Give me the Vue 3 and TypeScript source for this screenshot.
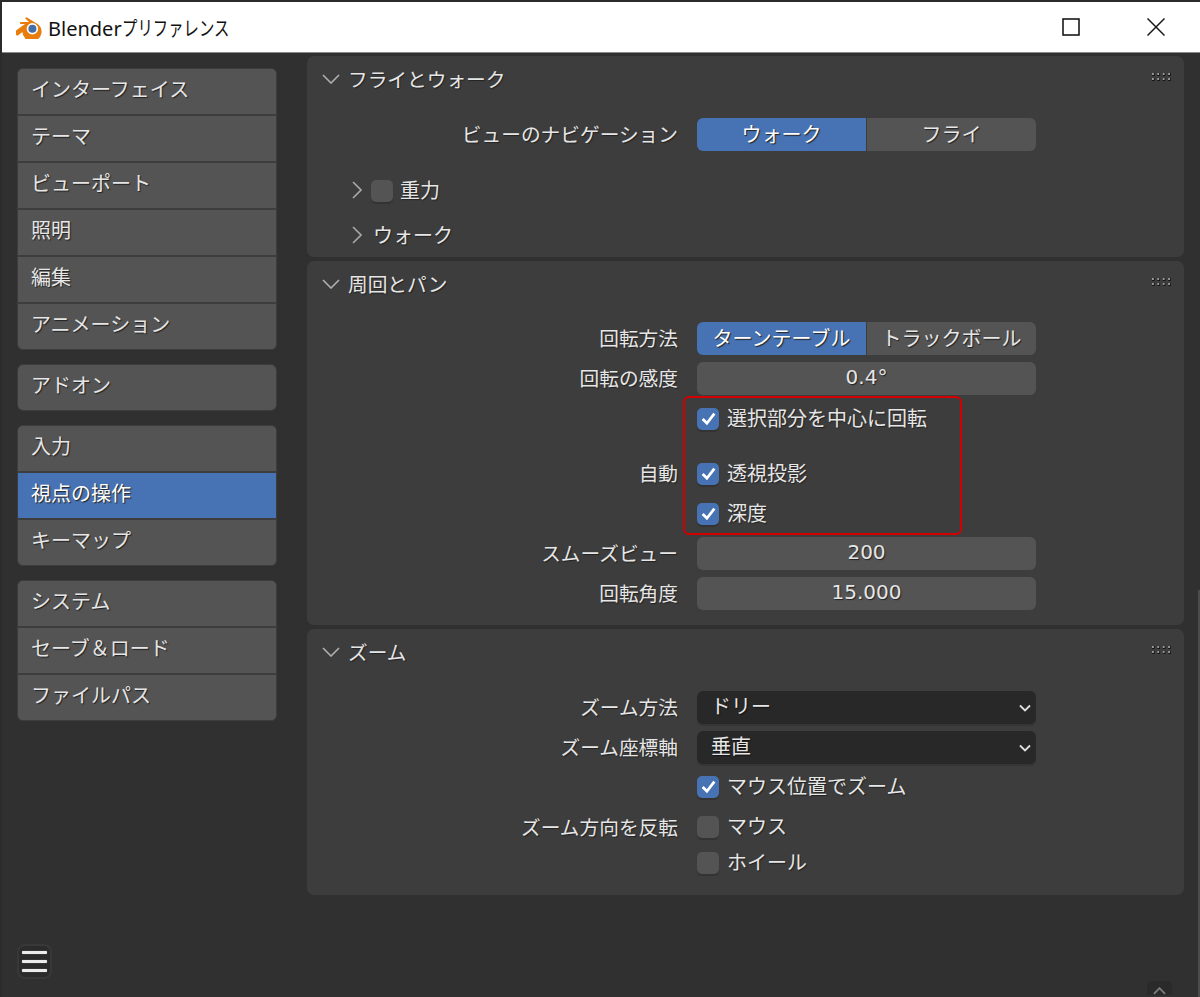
<template>
  <div class="window">
    <header class="titlebar">
      <svg class="logo" viewBox="0 0 28 26">
        <path d="M1 17.5 L10 11 L5.5 11 Q4.2 10.4 5.5 9 L14 9 L10.5 5.8 Q10 4.4 11.6 4.2 L20 9.5 A9.6 9.6 0 1 1 7.4 19 L3 22.4 Q1.2 23 1 21.6 Z" fill="#e87d0d" />
        <circle cx="17.4" cy="15.8" r="5.7" fill="#fff" />
        <circle cx="17.4" cy="15.8" r="4" fill="#456da6" />
      </svg>
      <span class="title">Blender<span class="title-kana">プリファレンス</span></span>
      <svg class="win-btn max" viewBox="0 0 18 18"><rect x="1" y="1" width="16" height="16" fill="none" stroke="#1a1a1a" stroke-width="1.6" /></svg>
      <svg class="win-btn close" viewBox="0 0 18 18"><path d="M0.5 0.5 L17.5 17.5 M17.5 0.5 L0.5 17.5" stroke="#1a1a1a" stroke-width="1.5" /></svg>
    </header>

    <div class="content">
      <nav class="sidebar">
        <div v-for="(group, i) in navGroups" :key="i" class="nav-group">
          <div
            v-for="item in group"
            :key="item"
            class="nav-item"
            :class="{ active: item === activeItem }"
          >{{ item }}</div>
        </div>
        <button class="menu-btn">
          <span></span><span></span><span></span>
        </button>
      </nav>

      <main class="panels">
        <!-- フライとウォーク -->
        <section class="panel fly">
          <div class="panel-head">
            <svg class="chev" viewBox="0 0 18 10"><path d="M1 1 L9 9 L17 1" /></svg>
            <span>フライとウォーク</span>
            <i class="grip"></i>
          </div>
          <div class="rows first-fly">
            <div class="row">
              <label>ビューのナビゲーション</label>
              <div class="toggle">
                <div class="seg on">ウォーク</div>
                <div class="seg">フライ</div>
              </div>
            </div>
          </div>
          <div class="sub sub-first">
            <svg class="chev-r" viewBox="0 0 10 18"><path d="M1 1 L9 9 L1 17" /></svg>
            <span class="box"></span>
            <span>重力</span>
          </div>
          <div class="sub sub-second">
            <svg class="chev-r wide" viewBox="0 0 10 18"><path d="M1 1 L9 9 L1 17" /></svg>
            <span>ウォーク</span>
          </div>
        </section>

        <!-- 周回とパン -->
        <section class="panel orbit">
          <div class="panel-head">
            <svg class="chev" viewBox="0 0 18 10"><path d="M1 1 L9 9 L17 1" /></svg>
            <span>周回とパン</span>
            <i class="grip"></i>
          </div>
          <div class="rows">
            <div class="row">
              <label>回転方法</label>
              <div class="toggle">
                <div class="seg on">ターンテーブル</div>
                <div class="seg">トラックボール</div>
              </div>
            </div>
            <div class="row">
              <label>回転の感度</label>
              <div class="field">0.4°</div>
            </div>
            <div class="row">
              <label></label>
              <div class="check"><span class="box on"><svg viewBox="0 0 16 16"><path d="M2.5 8.5 L6.5 12.5 L13.5 3.5" /></svg></span>選択部分を中心に回転</div>
            </div>
            <div class="row spaced">
              <label>自動</label>
              <div class="check"><span class="box on"><svg viewBox="0 0 16 16"><path d="M2.5 8.5 L6.5 12.5 L13.5 3.5" /></svg></span>透視投影</div>
            </div>
            <div class="row">
              <label></label>
              <div class="check"><span class="box on"><svg viewBox="0 0 16 16"><path d="M2.5 8.5 L6.5 12.5 L13.5 3.5" /></svg></span>深度</div>
            </div>
            <div class="row">
              <label>スムーズビュー</label>
              <div class="field">200</div>
            </div>
            <div class="row">
              <label>回転角度</label>
              <div class="field">15.000</div>
            </div>
          </div>
          <div class="highlight"></div>
        </section>

        <!-- ズーム -->
        <section class="panel zoom">
          <div class="panel-head">
            <svg class="chev" viewBox="0 0 18 10"><path d="M1 1 L9 9 L17 1" /></svg>
            <span>ズーム</span>
            <i class="grip"></i>
          </div>
          <div class="rows">
            <div class="row">
              <label>ズーム方法</label>
              <div class="select">ドリー<svg viewBox="0 0 12 8"><path d="M1 1.5 L6 6.5 L11 1.5" /></svg></div>
            </div>
            <div class="row">
              <label>ズーム座標軸</label>
              <div class="select">垂直<svg viewBox="0 0 12 8"><path d="M1 1.5 L6 6.5 L11 1.5" /></svg></div>
            </div>
            <div class="row">
              <label></label>
              <div class="check"><span class="box on"><svg viewBox="0 0 16 16"><path d="M2.5 8.5 L6.5 12.5 L13.5 3.5" /></svg></span>マウス位置でズーム</div>
            </div>
            <div class="row">
              <label>ズーム方向を反転</label>
              <div class="check"><span class="box"></span>マウス</div>
            </div>
            <div class="row tight">
              <label></label>
              <div class="check"><span class="box"></span>ホイール</div>
            </div>
          </div>
        </section>
      </main>
    </div>

    <div class="scroll-tab">
      <svg viewBox="0 0 14 8"><path d="M1 7 L7 1 L13 7" /></svg>
    </div>
    <div class="scrollbar"></div>
  </div>
</template>

<script setup lang="ts">
const activeItem = '視点の操作'

const navGroups: string[][] = [
  ['インターフェイス', 'テーマ', 'ビューポート', '照明', '編集', 'アニメーション'],
  ['アドオン'],
  ['入力', '視点の操作', 'キーマップ'],
  ['システム', 'セーブ＆ロード', 'ファイルパス']
]
</script>

<style>
html,
body {
  margin: 0;
  background: #303030;
}
</style>

<style scoped>
.window {
  position: relative;
  width: 1200px;
  height: 997px;
  overflow: hidden;
  background: #303030;
  font-family: "Noto Sans", "Noto Sans CJK JP", sans-serif;
  font-size: 20px;
  color: #e6e6e6;
  box-sizing: border-box;
  border-top: 2px solid #2b2b2b;
  border-left: 2px solid #2b2b2b;
}

.titlebar {
  display: flex;
  align-items: center;
  height: 50px;
  background: #fff;
  color: #111;
  border-bottom: 1px solid #8a8a8a;
  box-sizing: content-box;
  font-size: 20px;
}

.logo {
  width: 28px;
  height: 26px;
  margin-left: 13px;
  margin-bottom: 3px;
}

.title {
  margin-left: 5px;
  flex: 1;
}

.title-kana {
  display: inline-block;
  transform: scaleX(0.77);
  transform-origin: left center;
  margin-left: 0;
}

.win-btn {
  width: 18px;
  height: 18px;
}

.win-btn.max {
  margin-right: 67px;
}

.win-btn.close {
  margin-right: 35px;
}

.content {
  display: flex;
  padding-left: 15px;
}

.sidebar {
  width: 260px;
  padding-top: 15px;
  display: flex;
  flex-direction: column;
  gap: 14px;
}

.nav-group {
  border-radius: 6px;
  overflow: hidden;
  background: #545454;
  border: 1px solid #3d3d3d;
}

.nav-item {
  height: 45px;
  line-height: 42px;
  padding-left: 13px;
  background: #545454;
  text-shadow: 1px 1px 1px #222;
  border-bottom: 2px solid #3d3d3d;
}

.nav-item:last-child {
  border-bottom: none;
}

.nav-item.active {
  background: #4772b3;
  color: #fff;
}

.menu-btn {
  position: absolute;
  left: 15px;
  top: 942px;
  width: 35px;
  height: 35px;
  padding: 4px 3px;
  display: flex;
  flex-direction: column;
  justify-content: space-between;
  background: #2b2b2b;
  border: 2px solid #383838;
  border-radius: 8px;
  box-sizing: border-box;
}

.menu-btn span {
  display: block;
  height: 3px;
  width: 100%;
  margin: 1px 0;
  border-radius: 1px;
  background: #ececec;
  box-shadow: 0 0 1px #aaa;
}

.panels {
  width: 877px;
  margin-left: 30px;
  padding-top: 3px;
  display: flex;
  flex-direction: column;
  gap: 4px;
}

.panel {
  position: relative;
  background: #3d3d3d;
  border-radius: 7px;
}

.panel.fly {
  height: 201px;
}

.panel.orbit {
  height: 364px;
}

.panel.zoom {
  height: 266px;
}

.panel-head {
  position: relative;
  display: flex;
  align-items: center;
  height: 46px;
  padding-left: 15px;
  padding-bottom: 2px;
  box-sizing: border-box;
  font-size: 19.7px;
  text-shadow: 1px 1px 1px #222;
}

.chev {
  width: 18px;
  height: 10px;
  margin-right: 8px;
  margin-top: 2px;
  fill: none;
  stroke: #b0b0b0;
  stroke-width: 1.6;
}

.chev-r {
  width: 10px;
  height: 18px;
  margin-right: 9px;
  fill: none;
  stroke: #a8a8a8;
  stroke-width: 1.6;
}

.chev-r.wide {
  margin-right: 11px;
}

.grip {
  position: absolute;
  right: 12px;
  top: 17px;
  width: 20px;
  height: 10px;
  background-image: radial-gradient(circle at 1px 1px, #9a9a9a 0 1px, #161616 1.2px 2px, transparent 2.1px);
  background-size: 5.4px 5px;
}

.rows {
  display: flex;
  flex-direction: column;
  gap: 7px;
  padding-top: 15px;
}

.rows.first-fly {
  padding-top: 16px;
}

.zoom .rows {
  padding-top: 16px;
}

.row {
  display: grid;
  grid-template-columns: 371px 339px;
  column-gap: 19px;
  height: 33px;
  align-items: center;
}

.row.spaced {
  margin-top: 15px;
}

.row.tight {
  margin-top: -4px;
}

.row label {
  padding-bottom: 2px;
  text-align: right;
  font-size: 19.7px;
  text-shadow: 1px 1px 1px #222;
}

.toggle {
  display: flex;
  height: 33px;
  gap: 1px;
}

.seg {
  flex: 1;
  display: flex;
  align-items: center;
  justify-content: center;
  padding-bottom: 2px;
  background: #545454;
  border-radius: 0 6px 6px 0;
  text-shadow: 1px 1px 1px #222;
}

.seg.on {
  background: #4772b3;
  color: #fff;
  border-radius: 6px 0 0 6px;
}

.field {
  height: 33px;
  line-height: 31px;
  text-align: center;
  font-family: "DejaVu Sans", sans-serif;
  background: #545454;
  border-radius: 6px;
  text-shadow: 1px 1px 1px #222;
}

.select {
  position: relative;
  height: 33px;
  line-height: 31px;
  padding-left: 14px;
  background: #282828;
  border-radius: 6px;
  box-shadow: 0 2px 0 #353535;
  text-shadow: 1px 1px 1px #111;
}

.select svg {
  position: absolute;
  right: 5px;
  top: 13px;
  width: 12px;
  height: 8px;
  fill: none;
  stroke: #e0e0e0;
  stroke-width: 1.8;
}

.check {
  display: flex;
  align-items: center;
  padding-bottom: 2px;
  text-shadow: 1px 1px 1px #222;
}

.zoom .check {
  margin-top: -2px;
}

.box {
  flex: none;
  display: flex;
  align-items: center;
  justify-content: center;
  width: 22px;
  height: 22px;
  margin-right: 8px;
  margin-top: 2px;
  border-radius: 5px;
  background: #545454;
  box-shadow: 0 2px 1px #333;
}

.box.on {
  background: #4772b3;
}

.box svg {
  width: 17px;
  height: 17px;
  fill: none;
  stroke: #fff;
  stroke-width: 2.6;
}

.sub {
  display: flex;
  align-items: center;
  height: 33px;
  padding-left: 45px;
  padding-bottom: 2px;
  box-sizing: border-box;
  text-shadow: 1px 1px 1px #222;
}

.sub .box {
  margin-right: 7px;
}

.sub-first {
  margin-top: 23px;
}

.sub-second {
  margin-top: 12px;
}

.highlight {
  position: absolute;
  left: 376px;
  top: 135px;
  width: 279px;
  height: 139px;
  border: 2px solid #d40000;
  border-radius: 6px;
  box-sizing: border-box;
}

.scroll-tab {
  position: absolute;
  right: 28px;
  bottom: 2px;
  width: 25px;
  height: 14px;
  display: flex;
  justify-content: center;
  align-items: flex-end;
  background: #2a2a2a;
  border-radius: 5px 5px 0 0;
}

.scroll-tab svg {
  width: 13px;
  height: 8px;
  fill: none;
  stroke: #7d7d7d;
  stroke-width: 2;
}

.scrollbar {
  position: absolute;
  right: 0;
  top: 588px;
  bottom: 0;
  width: 2px;
  background: #4c4c4c;
}
</style>
